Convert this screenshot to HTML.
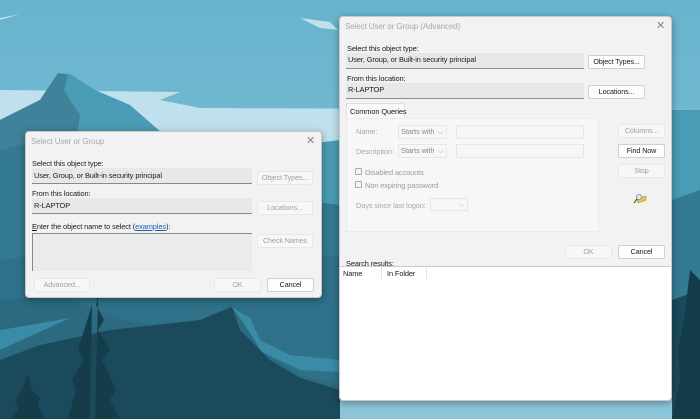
<!DOCTYPE html>
<html><head><meta charset="utf-8"><style>
*{margin:0;padding:0;box-sizing:border-box}
body{width:700px;height:419px;overflow:hidden;position:relative;font-family:"Liberation Sans",sans-serif;font-size:7.4px;color:#1a1a1a;letter-spacing:-0.1px}
.a{position:absolute;white-space:nowrap}
.dlg{position:absolute;background:#f2f2f2;border:1px solid #c8c8c8;border-radius:4px;box-shadow:0 2px 8px rgba(0,0,0,.35)}
.tb{position:absolute;background:#e8e8e8;border-bottom:1px solid #8a8a8a}
.btn{position:absolute;background:#fdfdfd;border:1px solid #d0d0d0;border-radius:2px;text-align:center;line-height:12px;font-size:7.2px}
.dis{background:#f7f7f7;border-color:#e8e8e8;color:#a0a0a0}
.g{color:#a8a8a8}
.cmb{position:absolute;background:#f7f7f7;border:1px solid #e6e6e6;color:#888;padding-left:2px;line-height:12px}
.chk{position:absolute;width:7px;height:7px;border:1px solid #aaa;border-radius:1px;background:#f6f6f6}
</style></head><body>
<svg class="a" style="left:0;top:0" width="700" height="419" viewBox="0 0 700 419">
<defs><linearGradient id="s" x1="0" y1="0" x2="0" y2="1"><stop offset="0" stop-color="#67b3cd"/><stop offset="1" stop-color="#8dc6da"/></linearGradient></defs>
<rect width="700" height="419" fill="url(#s)"/>
<path d="M0 90 L180 92 L160 100 L200 108 L700 110 L700 150 L0 150Z" fill="#bfe0ec"/>
<path d="M300 18 L330 22 L338 30 L320 28Z" fill="#bfe0ec"/>
<path d="M0 18 L20 14 L0 20Z" fill="#bfe0ec"/>
<path d="M0 120 L40 100 L58 73 L70 74 L95 90 L130 105 L170 140 L200 150 L260 150 L340 140 L340 419 L0 419Z" fill="#4a9bb5"/>
<path d="M0 120 L40 100 L58 73 L68 75 L64 90 L70 100 L80 115 L78 130 L60 160 L0 190Z" fill="#3f8299"/>
<path d="M0 150 L40 140 L90 150 L140 160 L200 175 L260 190 L300 200 L340 205 L340 419 L0 419Z" fill="#357a93"/>
<path d="M0 260 L60 250 L130 255 L200 262 L260 260 L340 255 L340 419 L0 419Z" fill="#2f7189"/>
<path d="M0 300 L60 295 L120 320 L180 330 L232 305 L250 318 L260 350 L300 375 L340 385 L340 419 L0 419Z" fill="#2b6a80"/>
<path d="M0 360 L40 345 L110 330 L200 320 L232 307 L240 330 L270 360 L300 378 L340 390 L340 419 L0 419Z" fill="#1b4a5c"/>
<path d="M232 307 L250 318 L260 340 L290 355 L340 360 L340 372 L300 370 L262 352 L245 325Z" fill="#3a8ba6"/>
<path d="M0 330 L30 325 L70 318 L0 350Z" fill="#3a8ba6"/>
<path d="M672 110 L700 110 L700 419 L672 419Z" fill="#4a9bb5"/>
<path d="M672 200 L700 190 L700 419 L672 419Z" fill="#357a93"/>
<path d="M672 300 L700 290 L700 419 L672 419Z" fill="#1b4a5c"/>
<path d="M95 419 L98 300 L92 295 L100 290 L96 305 L104 320 L98 330 L110 350 L102 360 L116 390 L110 400 L120 419Z" fill="#153c4b"/>
<path d="M90 419 L92 305 L78 350 L84 360 L72 380 L76 390 L68 419Z" fill="#153c4b"/>
<path d="M28 375 L22 390 L15 400 L18 410 L10 419 L45 419 L38 405 L40 398 L32 390Z" fill="#153c4b"/>
<path d="M690 270 L684 320 L678 350 L680 380 L672 419 L700 419 L700 280Z" fill="#153c4b"/>
</svg>

<div class="dlg" style="left:25px;top:131px;width:297px;height:167px">
<div class="a g" style="left:5px;top:5px;font-size:8px">Select User or Group</div>
<div class="a" style="left:280px;top:2px;font-size:11px;color:#888">✕</div>
<div class="a" style="left:6px;top:27px">Select this object type:</div>
<div class="tb" style="left:6px;top:36px;width:220px;height:16px"></div>
<div class="a" style="left:8px;top:39px">User, Group, or Built-in security principal</div>
<div class="btn dis" style="left:231px;top:39px;width:56px;height:14px">Object Types...</div>
<div class="a" style="left:6px;top:57px">From this location:</div>
<div class="tb" style="left:6px;top:66px;width:220px;height:16px"></div>
<div class="a" style="left:8px;top:69px">R-LAPTOP</div>
<div class="btn dis" style="left:231px;top:69px;width:56px;height:14px">Locations...</div>
<div class="a" style="left:6px;top:90px"><u>E</u>nter the object name to select (<u style="color:#1a5fb4">examples</u>):</div>
<div class="a" style="left:6px;top:101px;width:220px;height:38px;background:#ebebeb;border-left:1px solid #8a8a8a;border-top:1px solid #8a8a8a"></div>
<div class="btn dis" style="left:231px;top:102px;width:56px;height:14px">Check Names</div>
<div class="btn dis" style="left:8px;top:146px;width:56px;height:14px">Advanced...</div>
<div class="btn dis" style="left:188px;top:146px;width:47px;height:14px">OK</div>
<div class="btn" style="left:241px;top:146px;width:47px;height:14px">Cancel</div>
</div>

<div class="dlg" style="left:339px;top:16px;width:333px;height:385px">
<div class="a g" style="left:5px;top:5px;font-size:8px">Select User or Group (Advanced)</div>
<div class="a" style="left:316px;top:2px;font-size:11px;color:#888">✕</div>
<div class="a" style="left:7px;top:27px">Select this object type:</div>
<div class="tb" style="left:6px;top:36px;width:238px;height:16px"></div>
<div class="a" style="left:8px;top:38px">User, Group, or Built-in security principal</div>
<div class="btn" style="left:248px;top:38px;width:57px;height:14px">Object Types...</div>
<div class="a" style="left:7px;top:57px">From this location:</div>
<div class="tb" style="left:6px;top:66px;width:238px;height:16px"></div>
<div class="a" style="left:8px;top:68px">R-LAPTOP</div>
<div class="btn" style="left:248px;top:68px;width:57px;height:14px">Locations...</div>
<div class="a" style="left:6px;top:86px;width:59px;height:15px;background:#f8f8f8;border:1px solid #e0e0e0;border-bottom:none;padding:3px 0 0 3px">Common Queries</div>
<div class="a" style="left:6px;top:101px;width:253px;height:114px;background:#f7f7f7;border:1px solid #ececec"></div>
<div class="a g" style="left:16px;top:110px">Name:</div>
<div class="cmb" style="left:58px;top:108px;width:49px;height:14px">Starts with <span style="float:right;margin-right:3px;color:#aaa">⌵</span></div>
<div class="a" style="left:116px;top:108px;width:128px;height:14px;background:#f6f6f6;border:1px solid #e6e6e6"></div>
<div class="a g" style="left:16px;top:130px">Description:</div>
<div class="cmb" style="left:58px;top:127px;width:49px;height:14px">Starts with <span style="float:right;margin-right:3px;color:#aaa">⌵</span></div>
<div class="a" style="left:116px;top:127px;width:128px;height:14px;background:#f6f6f6;border:1px solid #e6e6e6"></div>
<div class="chk" style="left:15px;top:151px"></div><div class="a g" style="left:25px;top:151px;color:#999">Disabled accounts</div>
<div class="chk" style="left:15px;top:164px"></div><div class="a g" style="left:25px;top:164px;color:#999">Non expiring password</div>
<div class="a g" style="left:16px;top:184px">Days since last logon:</div>
<div class="cmb" style="left:90px;top:181px;width:38px;height:13px"><span style="float:right;margin-right:3px;color:#bbb">⌵</span></div>
<div class="btn dis" style="left:278px;top:107px;width:47px;height:14px">Columns...</div>
<div class="btn" style="left:278px;top:127px;width:47px;height:14px">Find Now</div>
<div class="btn dis" style="left:278px;top:147px;width:47px;height:14px">Stop</div>
<svg class="a" style="left:293px;top:176px" width="14" height="12" viewBox="0 0 14 12"><path d="M4 6 L13 3 L13 7 L5 10Z" fill="#e6c94a" stroke="#a08a2a" stroke-width=".6"/><circle cx="6" cy="4" r="2.6" fill="#d8eef8" stroke="#6f8ea0" stroke-width=".8"/><path d="M4 6 L1 10" stroke="#555" stroke-width="1.2"/></svg>
<div class="btn dis" style="left:225px;top:228px;width:47px;height:14px">OK</div>
<div class="btn" style="left:278px;top:228px;width:47px;height:14px">Cancel</div>
<div class="a" style="left:6px;top:242px">Search results:</div>
<div class="a" style="left:0;top:249px;width:331px;height:134px;background:#fff;border-top:1px solid #ccc;border-radius:0 0 4px 4px"></div>
<div class="a" style="left:3px;top:252px">Name</div>
<div class="a" style="left:41px;top:250px;width:1px;height:12px;background:#e6e6e6"></div>
<div class="a" style="left:47px;top:252px">In Folder</div>
<div class="a" style="left:86px;top:250px;width:1px;height:12px;background:#e6e6e6"></div>
</div>
</body></html>
